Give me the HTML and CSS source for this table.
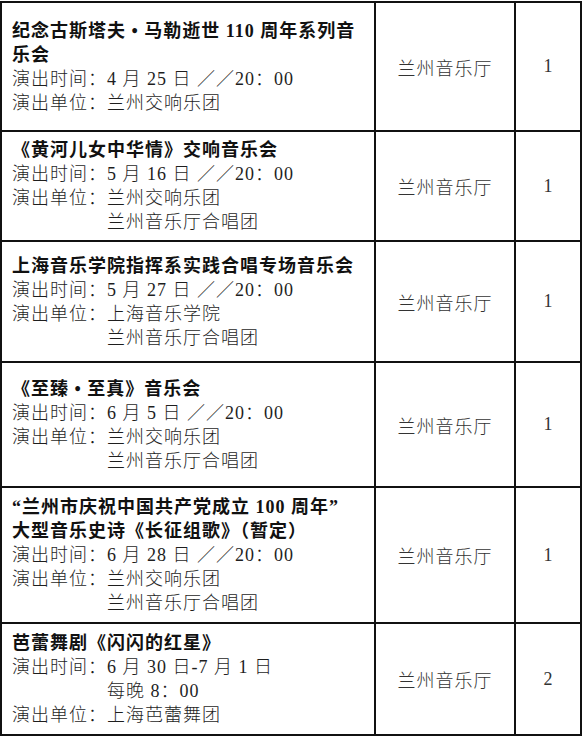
FILE: index.html
```html
<!DOCTYPE html>
<html lang="zh-CN">
<head>
<meta charset="utf-8">
<title>演出安排</title>
<link rel="stylesheet" href="styles.css">
</head>
<body>
<table class="sched">
  <colgroup>
    <col class="c-info">
    <col class="c-venue">
    <col class="c-num">
  </colgroup>
  <tbody>
    <tr class="r1">
      <td class="info">
        <div class="title">纪念古斯塔夫 • 马勒逝世 110 周年系列音<br>乐会</div>
        <div class="kv"><span class="k">演出时间：</span><span class="v">4 月 25 日 ／／20：00</span></div>
        <div class="kv"><span class="k">演出单位：</span><span class="v">兰州交响乐团</span></div>
      </td>
      <td class="venue">兰州音乐厅</td>
      <td class="num">1</td>
    </tr>
    <tr class="r2">
      <td class="info">
        <div class="title">《黄河儿女中华情》交响音乐会</div>
        <div class="kv"><span class="k">演出时间：</span><span class="v">5 月 16 日 ／／20：00</span></div>
        <div class="kv"><span class="k">演出单位：</span><span class="v">兰州交响乐团<br>兰州音乐厅合唱团</span></div>
      </td>
      <td class="venue">兰州音乐厅</td>
      <td class="num">1</td>
    </tr>
    <tr class="r3">
      <td class="info">
        <div class="title">上海音乐学院指挥系实践合唱专场音乐会</div>
        <div class="kv"><span class="k">演出时间：</span><span class="v">5 月 27 日 ／／20：00</span></div>
        <div class="kv"><span class="k">演出单位：</span><span class="v">上海音乐学院<br>兰州音乐厅合唱团</span></div>
      </td>
      <td class="venue">兰州音乐厅</td>
      <td class="num">1</td>
    </tr>
    <tr class="r4">
      <td class="info">
        <div class="title">《至臻 • 至真》音乐会</div>
        <div class="kv"><span class="k">演出时间：</span><span class="v">6 月 5 日 ／／20：00</span></div>
        <div class="kv"><span class="k">演出单位：</span><span class="v">兰州交响乐团<br>兰州音乐厅合唱团</span></div>
      </td>
      <td class="venue">兰州音乐厅</td>
      <td class="num">1</td>
    </tr>
    <tr class="r5">
      <td class="info">
        <div class="title">“兰州市庆祝中国共产党成立 100 周年”<br>大型音乐史诗《长征组歌》（暂定）</div>
        <div class="kv"><span class="k">演出时间：</span><span class="v">6 月 28 日 ／／20：00</span></div>
        <div class="kv"><span class="k">演出单位：</span><span class="v">兰州交响乐团<br>兰州音乐厅合唱团</span></div>
      </td>
      <td class="venue">兰州音乐厅</td>
      <td class="num">1</td>
    </tr>
    <tr class="r6">
      <td class="info">
        <div class="title">芭蕾舞剧《闪闪的红星》</div>
        <div class="kv"><span class="k">演出时间：</span><span class="v">6 月 30 日-7 月 1 日<br>每晚 8：00</span></div>
        <div class="kv"><span class="k">演出单位：</span><span class="v">上海芭蕾舞团</span></div>
      </td>
      <td class="venue">兰州音乐厅</td>
      <td class="num">2</td>
    </tr>
  </tbody>
</table>
</body>
</html>
```
FILE: styles.css
```css
html, body {
  margin: 0;
  padding: 0;
  background: #ffffff;
}

body {
  font-family: "Liberation Serif", "Noto Sans CJK SC", serif;
  font-size: 18px;
  color: #1e1e1e;
}

.sched {
  border-collapse: collapse;
  table-layout: fixed;
  width: 582px;
  margin: 1px 0 0 0;
}

.c-info { width: 374px; }
.c-venue { width: 140px; }
.c-num { width: 66px; }

.sched td {
  border: 2px solid #111111;
  vertical-align: middle;
  padding: 0;
}

.r1 { height: 129px; }
.r2 { height: 110px; }
.r3 { height: 121px; }
.r4 { height: 125px; }
.r5 { height: 136px; }
.r6 { height: 112px; }

.info {
  padding: 0 0 0 10px !important;
  line-height: 24px;
  font-weight: 300;
  letter-spacing: 1px;
}

.title {
  font-weight: 700;
  letter-spacing: 1px;
  color: #111111;
}

.kv {
  display: flex;
}

.kv .k {
  flex: none;
}

.venue {
  text-align: center;
  font-weight: 300;
  letter-spacing: 1px;
  color: #333333;
}

.num {
  text-align: center;
  color: #333333;
}
```
